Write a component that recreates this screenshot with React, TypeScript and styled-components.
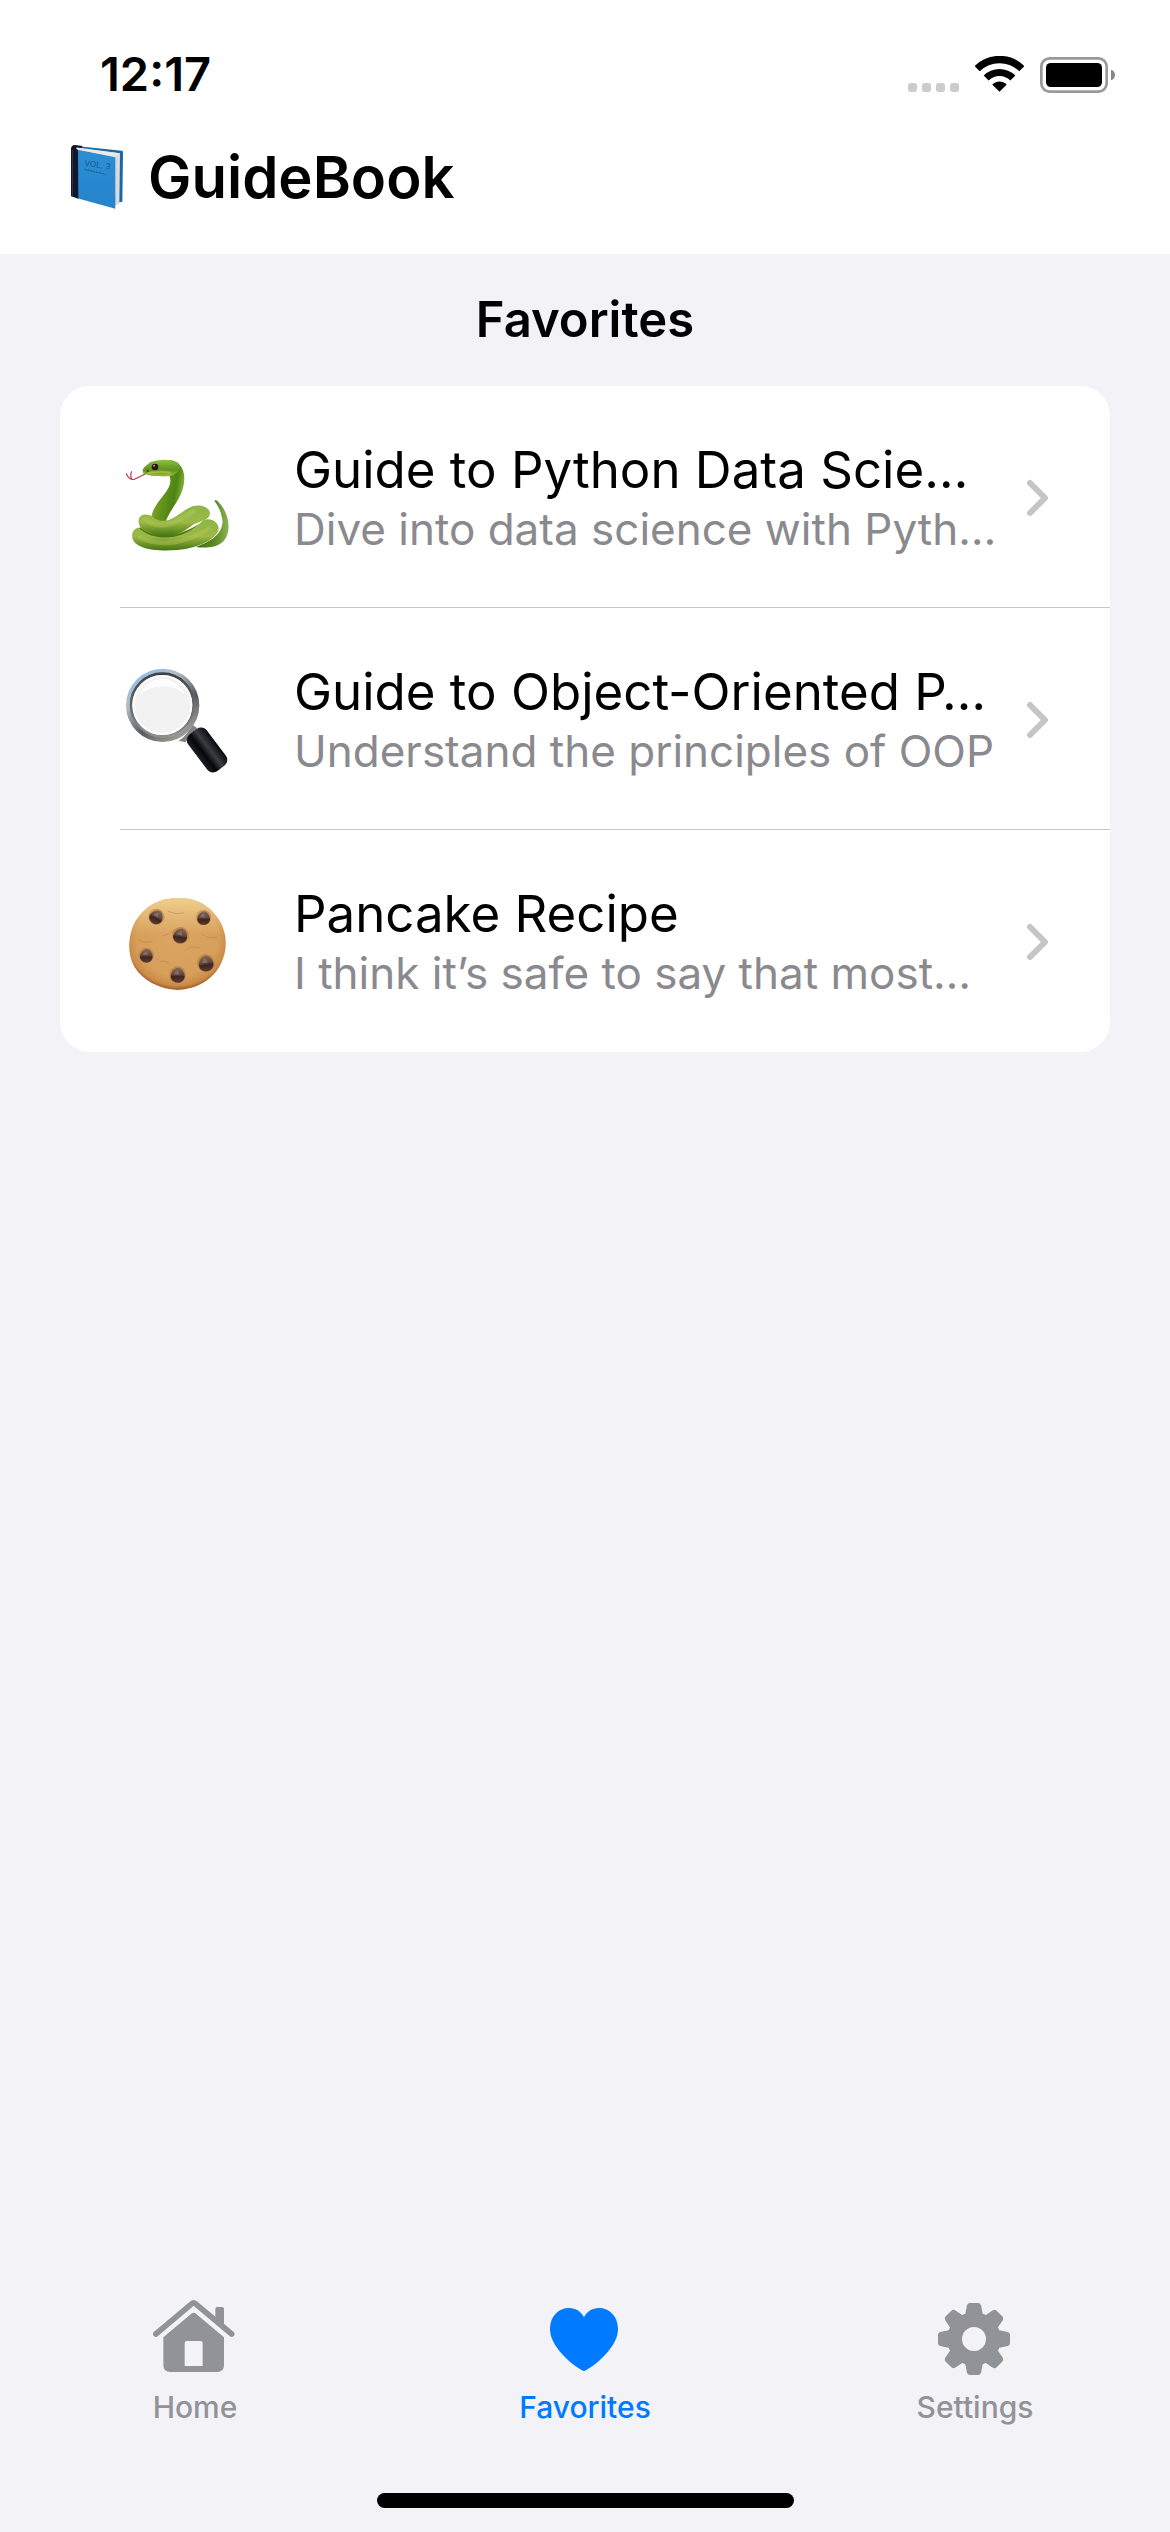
import React from "react";
import styled, { createGlobalStyle } from "styled-components";

const colors = {
  ink: "#000000",
  page: "#f2f2f7",
  surface: "#ffffff",
  secondary: "#8a8a8e",
  separator: "#c6c6c8",
  chevron: "#c5c5c7",
  tab: "#929398",
  accent: "#007aff",
};

const GlobalStyle = createGlobalStyle`
  *, *::before, *::after { box-sizing: border-box; }
  body {
    margin: 0;
    background: ${colors.page};
    color: ${colors.ink};
    font-family: Inter, "Liberation Sans", sans-serif;
  }
`;

const Screen = styled.div`
  min-height: 100vh;
  display: flex;
  flex-direction: column;
  background: ${colors.page};
`;

const Header = styled.header`
  background: ${colors.surface};
  padding: 46px 0 41px;
`;

const StatusBar = styled.div`
  display: flex;
  align-items: center;
  justify-content: space-between;
  padding: 0 55px 0 100px;
  margin-bottom: 39px;
`;

const Clock = styled.time`
  font-size: 47px;
  line-height: 56px;
  font-weight: 600;
`;

const StatusIcons = styled.div`
  display: flex;
  gap: 16px;
`;

const StatusIcon = styled.svg<{ $width: number }>`
  display: block;
  width: ${(p) => p.$width}px;
  height: 37px;
`;

const Brand = styled.div`
  display: flex;
  align-items: center;
  gap: 25px;
  padding: 0 71px;
`;

const BrandIcon = styled.svg`
  flex: none;
  width: 52px;
  height: 64px;
`;

const BrandName = styled.h1`
  margin: 0;
  font-size: 58px;
  line-height: 72px;
  font-weight: 600;
`;

const Main = styled.main`
  flex: 1;
  padding: 0 60px;
`;

const SectionTitle = styled.h2`
  margin: 0;
  padding: 36px 0;
  font-size: 49px;
  line-height: 60px;
  font-weight: 600;
  text-align: center;
`;

const Card = styled.ul`
  margin: 0;
  padding: 0 0 0 60px;
  list-style: none;
  background: ${colors.surface};
  border-radius: 30px;
`;

const Row = styled.li`
  border-bottom: 1px solid ${colors.separator};

  &:last-child {
    border-bottom-color: transparent;
  }
`;

const RowLink = styled.a`
  display: flex;
  align-items: center;
  height: 221px;
  padding: 2px 60px 0 0;
  color: inherit;
  text-decoration: none;
`;

const Emoji = styled.svg`
  flex: none;
  width: 116px;
  height: 116px;
  margin-right: 58px;
`;

const RowText = styled.span`
  flex: 1;
  min-width: 0;
`;

const RowTitle = styled.span`
  display: block;
  overflow: hidden;
  text-overflow: ellipsis;
  white-space: nowrap;
  font-size: 51px;
  line-height: 62px;
`;

const RowSubtitle = styled(RowTitle)`
  color: ${colors.secondary};
  font-size: 44px;
  line-height: 56px;
`;

const Chevron = styled.svg`
  flex: none;
  width: 24px;
  height: 38px;
`;

const TabBar = styled.nav`
  display: grid;
  grid-template-columns: repeat(3, 1fr);
  padding-bottom: 68px;
`;

const Tab = styled.button<{ $active?: boolean }>`
  display: flex;
  flex-direction: column;
  align-items: center;
  gap: 10px;
  margin: 0;
  padding: 0;
  border: 0;
  background: none;
  color: ${(p) => (p.$active ? colors.accent : colors.tab)};
  font-family: inherit;
  font-size: 30px;
  line-height: 36px;
  font-weight: 500;
  cursor: pointer;
`;

const TabIcon = styled.svg`
  width: 84px;
  height: 84px;
  fill: currentColor;
`;

const HomeIndicator = styled.div`
  width: 417px;
  max-width: 60%;
  height: 15px;
  margin: 0 auto 24px;
  border-radius: 8px;
  background: ${colors.ink};
`;

const CellularDots = () => (
  <StatusIcon $width={51} viewBox="141 75 153 111" aria-hidden="true">
    {[141, 183, 225, 267].map((x) => (
      <rect key={x} x={x} y="156" width="27" height="27" rx="8" fill="#cccccc" />
    ))}
  </StatusIcon>
);

const Wifi = () => (
  <StatusIcon $width={49} viewBox="344 75 147 111" aria-hidden="true">
    <g fill="none" stroke="#000">
      <path d="M350.5 113 A95.500 95.500 0 0 1 484.5 113" strokeWidth="22" />
      <path d="M377.500 141 A56.500 56.500 0 0 1 457.500 141" strokeWidth="21" />
    </g>
    <path d="M417.500 182 L397 162 Q396 160 398 158.500 Q417.500 144 437 158.500 Q439 160 438 162Z" />
  </StatusIcon>
);

const Battery = () => (
  <StatusIcon $width={75} viewBox="540 75 225 111" aria-hidden="true">
    <rect x="544" y="82" width="196" height="100" rx="25" fill="none" stroke="#999" strokeWidth="8" />
    <rect x="558" y="96" width="168" height="72" rx="14" />
    <path d="M753 116 Q765 120 765 132 Q765 144 753 148Z" fill="#888" />
  </StatusIcon>
);

const Book = () => (
  <BrandIcon viewBox="93 376 156 192" aria-hidden="true">
    <defs>
      <linearGradient id="bookCover" x1="0" y1="0" x2="0" y2="1">
        <stop offset="0" stopColor="#2b8fd6" />
        <stop offset="1" stopColor="#2583cb" />
      </linearGradient>
      <linearGradient id="bookPages" x1="0" y1="0" x2="1" y2="0">
        <stop offset="0" stopColor="#a9a9a9" />
        <stop offset="1" stopColor="#dddddd" />
      </linearGradient>
    </defs>
    <path d="M100 378 L246 393 Q249 394 249 398 L247 546 L226 551 L120 420Z" fill="#176aa8" />
    <path d="M108 385 L240 401 L238 553 L224 558 L224 415Z" fill="url(#bookPages)" />
    <path d="M107 383 L240 401 L226 413 L106 391Z" fill="#e9e9e8" />
    <path d="M112 390 L226 413 L226 567 L112 536Z" fill="url(#bookCover)" />
    <path d="M93 388 Q93 376 106 376 L127 379 L126 385 L110 383 Q106 386 114 391 L115 537 L93 530Z" fill="#10162b" />
    <path d="M97 390 L97 529" stroke="#353b4d" strokeWidth="3" />
    <text x="132" y="438" fill="#185a8c" fontFamily="Inter, sans-serif" fontSize="25" transform="rotate(9 132 438)">VOL. 3</text>
    <path d="M133 449 L197 464" stroke="#1b669d" strokeWidth="4" strokeDasharray="7 2" />
  </BrandIcon>
);

const Snake = () => (
  <Emoji viewBox="60 27 348 348" aria-hidden="true">
    <defs>
      <linearGradient id="snakeNeck" x1="0" y1="0" x2="1" y2="0.3">
        <stop offset="0" stopColor="#cfd94a" />
        <stop offset="0.35" stopColor="#6f9a20" />
        <stop offset="0.8" stopColor="#4c8414" />
        <stop offset="1" stopColor="#82ad36" />
      </linearGradient>
      <linearGradient id="snakeCoil" x1="0" y1="0" x2="0" y2="1">
        <stop offset="0" stopColor="#8db646" />
        <stop offset="0.55" stopColor="#9cb945" />
        <stop offset="1" stopColor="#44750f" />
      </linearGradient>
      <linearGradient id="snakeHead" x1="0" y1="0" x2="0" y2="1">
        <stop offset="0" stopColor="#8fbe43" />
        <stop offset="0.6" stopColor="#5f931d" />
        <stop offset="1" stopColor="#a6b83c" />
      </linearGradient>
      <linearGradient id="snakeTail" x1="0" y1="0" x2="1" y2="0">
        <stop offset="0" stopColor="#3f6e10" />
        <stop offset="0.6" stopColor="#5c8c25" />
        <stop offset="1" stopColor="#8db455" />
      </linearGradient>
    </defs>
    <path d="M135 129 Q116 139 103 145 Q88 148 79 128 M96 145 Q89 134 95 122" fill="none" stroke="#c3384c" strokeWidth="3.500" strokeLinecap="round" />
    <path d="M343 209 Q348 204 355 212 Q385 244 386 287 Q384 340 333 348 Q308 351 288 348 Q318 337 340 322 Q372 296 367 264 Q363 236 343 209Z" fill="url(#snakeTail)" />
    <path d="M97 320 C92 294 118 279 146 296 C200 325 280 300 311 267 C334 258 357 274 356 294 C353 323 290 356 218 358 C148 361 102 347 97 320Z" fill="url(#snakeCoil)" />
    <path d="M120 290 C170 327 244 318 296 278 C250 326 166 334 119 293Z" fill="#365f0b" opacity="0.75" />
    <path d="M207 132 C229 176 158 206 153 264 L196 277 C207 232 254 202 253 139 C252 110 235 88 207 87Z" fill="url(#snakeNeck)" />
    <path d="M116 266 C120 247 145 246 161 260 C207 291 240 238 280 225 C303 219 329 229 330 247 C330 266 304 270 279 281 C229 321 182 324 144 302 C120 295 114 280 116 266Z" fill="url(#snakeCoil)" />
    <path d="M134 263 C177 302 225 278 281 240" stroke="#b0c95d" strokeWidth="14" opacity="0.45" fill="none" strokeLinecap="round" />
    <path d="M120 320 C180 350 255 338 328 292" stroke="#b5c759" strokeWidth="13" opacity="0.4" fill="none" strokeLinecap="round" />
    <path d="M129 126 C125 110 136 108 150 94 C177 84 215 82 235 98 C250 113 231 130 207 136 C174 137 141 135 129 126Z" fill="url(#snakeHead)" />
    <path d="M142 127 Q174 118 212 125" stroke="#b9c953" strokeWidth="6" fill="none" opacity="0.6" />
    <circle cx="165" cy="108" r="10" fill="#2a1714" />
    <circle cx="162" cy="104" r="3" fill="#b89b97" />
    <ellipse cx="143" cy="120" rx="3" ry="4" fill="#29440b" />
  </Emoji>
);

const Magnifier = () => (
  <Emoji viewBox="60 63 348 348" aria-hidden="true">
    <defs>
      <linearGradient id="lensRim" x1="0.1" y1="0" x2="0.8" y2="1">
        <stop offset="0" stopColor="#8dbdf0" />
        <stop offset="0.3" stopColor="#b4bdc6" />
        <stop offset="0.65" stopColor="#565a5c" />
        <stop offset="1" stopColor="#aaa49e" />
      </linearGradient>
      <linearGradient id="lensInner" x1="0" y1="0" x2="0" y2="1">
        <stop offset="0" stopColor="#3d4244" />
        <stop offset="1" stopColor="#8b8e8f" />
      </linearGradient>
      <linearGradient id="lensHandle" x1="0" y1="0" x2="1" y2="0">
        <stop offset="0" stopColor="#1c222b" />
        <stop offset="0.3" stopColor="#050607" />
        <stop offset="0.6" stopColor="#3c3d40" />
        <stop offset="1" stopColor="#07090b" />
      </linearGradient>
    </defs>
    <path d="M236 299 Q258 287 277 251 L292 262 L256 304Z" fill="#7e8486" />
    <circle cx="188" cy="193" r="103" fill="none" stroke="url(#lensRim)" strokeWidth="14" />
    <circle cx="187" cy="192" r="94" fill="#f2f2f3" stroke="url(#lensInner)" strokeWidth="8" />
    <circle cx="187" cy="192" r="87" fill="none" stroke="#ffffff" strokeWidth="6" opacity="0.8" />
    <path d="M118 161 Q136 117 187 113 Q234 117 254 158 Q190 112 118 161Z" fill="#ffffff" opacity="0.8" />
    <rect x="-35" y="-69" width="70" height="138" rx="22" transform="translate(321 327) rotate(-37)" fill="url(#lensHandle)" />
  </Emoji>
);

const chips = [
  { x: 169, y: 138, r: 20, tilt: 25 },
  { x: 311, y: 141, r: 19, tilt: 0 },
  { x: 241, y: 194, r: 21, tilt: 10 },
  { x: 139, y: 254, r: 19, tilt: 0 },
  { x: 318, y: 277, r: 22, tilt: -10 },
  { x: 233, y: 312, r: 21, tilt: 0 },
];

const Cookie = () => (
  <Emoji viewBox="60 39 348 348" aria-hidden="true">
    <defs>
      <radialGradient id="cookieDough" cx="0.5" cy="0.43" r="0.56">
        <stop offset="0" stopColor="#dba462" />
        <stop offset="0.75" stopColor="#d79f5b" />
        <stop offset="0.93" stopColor="#c98b48" />
        <stop offset="1" stopColor="#a9622b" />
      </radialGradient>
      <linearGradient id="cookieLight" x1="0" y1="0" x2="0" y2="1">
        <stop offset="0" stopColor="#f3d392" stopOpacity="0.9" />
        <stop offset="0.4" stopColor="#f3d392" stopOpacity="0" />
      </linearGradient>
      <linearGradient id="cookieChip" x1="0" y1="0" x2="0" y2="1">
        <stop offset="0" stopColor="#81675c" />
        <stop offset="0.45" stopColor="#65483f" />
        <stop offset="0.6" stopColor="#3e2520" />
        <stop offset="1" stopColor="#5a3b30" />
      </linearGradient>
    </defs>
    <path d="M235 81 C295 80 334 110 356 145 C383 187 384 237 362 280 C339 325 292 355 232 357 C178 354 128 328 103 287 C80 247 84 192 106 151 C135 106 176 81 235 81Z" fill="url(#cookieDough)" />
    <path d="M235 81 C295 80 334 110 356 145 C383 187 384 237 362 280 C339 325 292 355 232 357 C178 354 128 328 103 287 C80 247 84 192 106 151 C135 106 176 81 235 81Z" fill="url(#cookieLight)" />
    <g fill="none" stroke="#b87b38" strokeWidth="3" opacity="0.45" strokeLinecap="round">
      <path d="M205 122 Q229 132 251 126 M188 195 Q207 192 222 177 M116 206 Q135 219 155 211 M255 238 Q272 222 298 231 M306 190 Q326 204 350 199 M180 272 Q200 267 211 280" />
    </g>
    {chips.map((chip) => (
      <g key={`${chip.x}-${chip.y}`} transform={`translate(${chip.x} ${chip.y}) rotate(${chip.tilt}) scale(${chip.r / 20})`}>
        <ellipse cx="0" cy="-1" rx="24" ry="24" fill="#a9682c" opacity="0.45" />
        <path d="M-20 3 C-20 -9 -8 -21 1 -21 C11 -21 20 -8 20 4 C19 16 9 22 0 22 C-12 21 -20 14 -20 3Z" fill="url(#cookieChip)" />
        <path d="M-12 -3 Q-4 -13 1 -14 L5 -1Z" fill="#a18b80" opacity="0.5" />
      </g>
    ))}
  </Emoji>
);

const HomeIcon = () => (
  <TabIcon viewBox="99 75 252 252" aria-hidden="true">
    <path d="M107.500 192 L215 101.500 Q221 96.500 227 101.500 L335 192" fill="none" stroke="currentColor" strokeWidth="17" strokeLinecap="round" />
    <path d="M286 142 V117 Q286 111 292 111 H306 Q312 111 312 117 V166Z" />
    <path
      fillRule="evenodd"
      d="M130 202 L214 131 Q221 126 228 131 L312 202 V285 Q312 306 291 306 H151 Q130 306 130 285Z M194 219 V288 H248 V219 Q248 213 242 213 H200 Q194 213 194 219Z"
    />
  </TabIcon>
);

const HeartIcon = () => (
  <TabIcon viewBox="159 75 252 252" aria-hidden="true">
    <path d="M282 303 C272 303 180 240 180 178 C180 138 206 114 237 114 C258 114 274 125 282 142 C290 125 306 114 327 114 C358 114 384 138 384 178 C384 240 292 303 282 303Z" />
  </TabIcon>
);

const GearIcon = () => (
  <TabIcon viewBox="159 75 252 252" aria-hidden="true">
    <circle cx="282" cy="207" r="58" fill="none" stroke="currentColor" strokeWidth="44" />
    {[0, 45, 90, 135, 180, 225, 270, 315].map((angle) => (
      <path
        key={angle}
        transform={`rotate(${angle} 282 207)`}
        d="M248 138 Q255 136 256 131 L261 106 Q263 99 270 99 H294 Q301 99 303 106 L308 131 Q309 136 316 138 L300 156 H264Z"
      />
    ))}
  </TabIcon>
);

const favorites = [
  { Icon: Snake, title: "Guide to Python Data Scie…", subtitle: "Dive into data science with Pyth…" },
  { Icon: Magnifier, title: "Guide to Object-Oriented P…", subtitle: "Understand the principles of OOP" },
  { Icon: Cookie, title: "Pancake Recipe", subtitle: "I think it’s safe to say that most…" },
];

const tabs = [
  { Icon: HomeIcon, label: "Home", active: false },
  { Icon: HeartIcon, label: "Favorites", active: true },
  { Icon: GearIcon, label: "Settings", active: false },
];

export default function App() {
  return (
    <Screen>
      <GlobalStyle />
      <Header>
        <StatusBar>
          <Clock>12:17</Clock>
          <StatusIcons>
            <CellularDots />
            <Wifi />
            <Battery />
          </StatusIcons>
        </StatusBar>
        <Brand>
          <Book />
          <BrandName>GuideBook</BrandName>
        </Brand>
      </Header>
      <Main>
        <SectionTitle>Favorites</SectionTitle>
        <Card>
          {favorites.map(({ Icon, title, subtitle }) => (
            <Row key={title}>
              <RowLink href="#">
                <Icon />
                <RowText>
                  <RowTitle>{title}</RowTitle>
                  <RowSubtitle>{subtitle}</RowSubtitle>
                </RowText>
                <Chevron viewBox="0 0 24 38" aria-hidden="true">
                  <path d="M4 4 L19 19 L4 34" fill="none" stroke={colors.chevron} strokeWidth="6" strokeLinecap="round" strokeLinejoin="round" />
                </Chevron>
              </RowLink>
            </Row>
          ))}
        </Card>
      </Main>
      <TabBar>
        {tabs.map(({ Icon, label, active }) => (
          <Tab key={label} type="button" $active={active} aria-current={active ? "page" : undefined}>
            <Icon />
            {label}
          </Tab>
        ))}
      </TabBar>
      <HomeIndicator />
    </Screen>
  );
}
